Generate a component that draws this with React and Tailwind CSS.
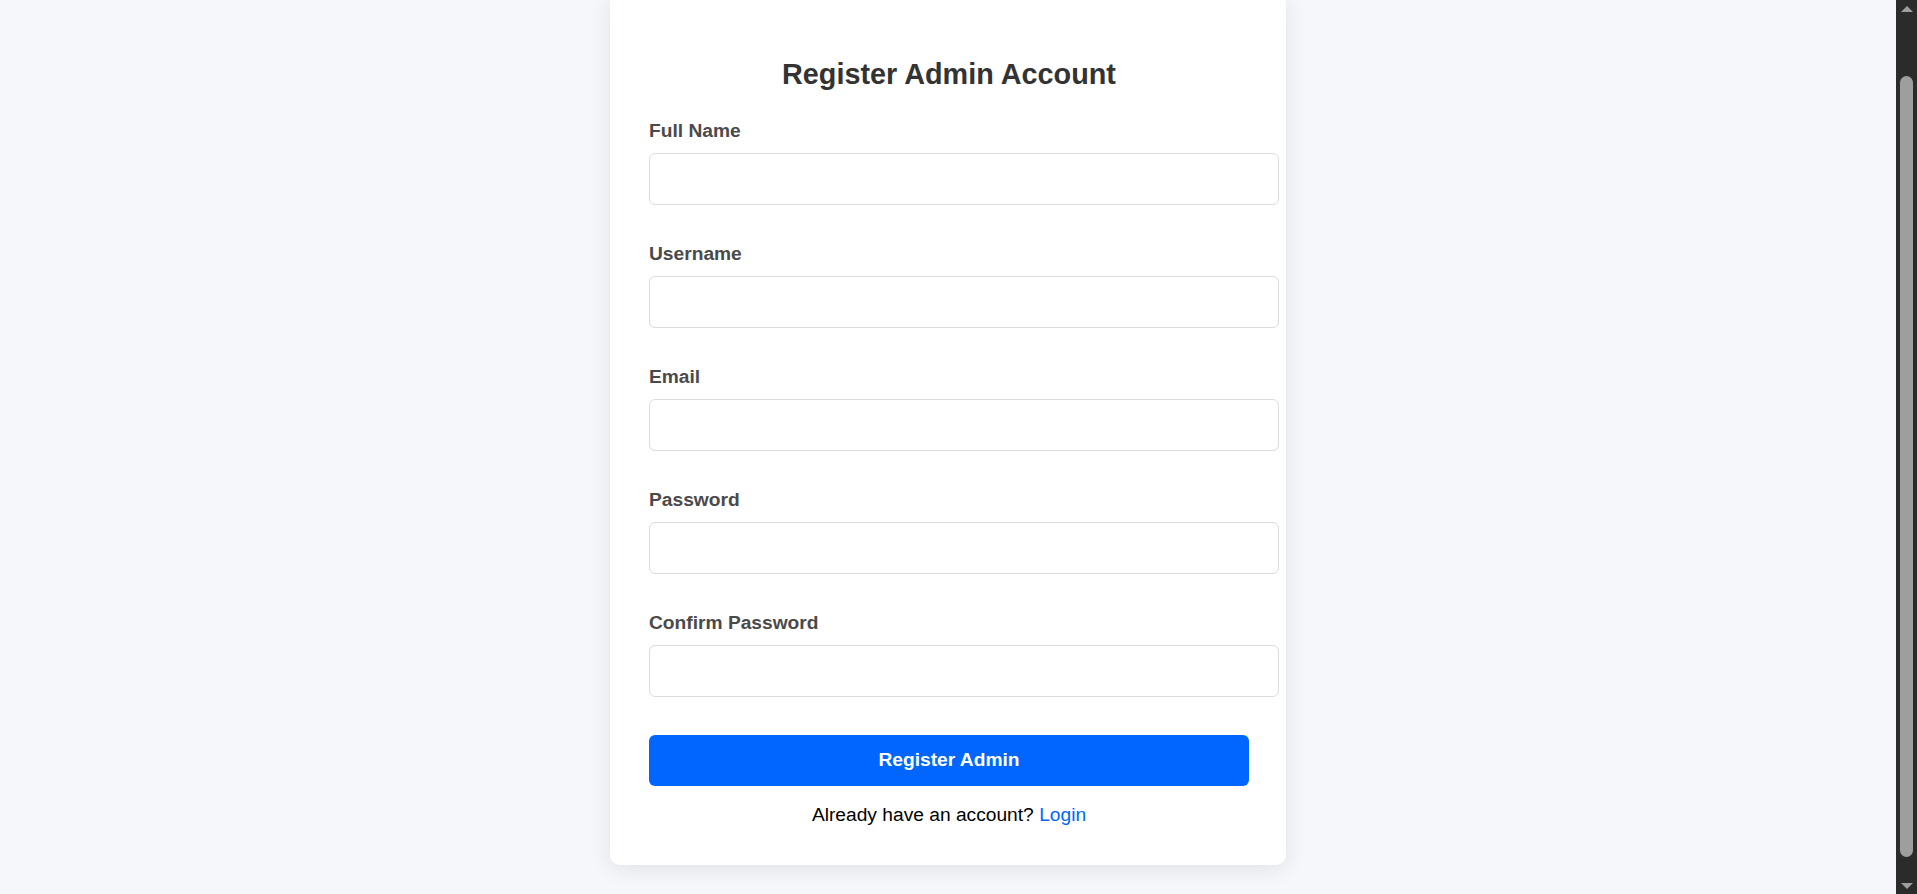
import { useState } from "react";

const fields = [
  { id: "fullName", label: "Full Name", type: "text" },
  { id: "username", label: "Username", type: "text" },
  { id: "email", label: "Email", type: "email" },
  { id: "password", label: "Password", type: "password" },
  { id: "confirm", label: "Confirm Password", type: "password" },
];

function Scrollbar() {
  return (
    <div className="w-[21px] h-full bg-[#2b2b2b] flex flex-col items-center shrink-0">
      {/* up arrow */}
      <div className="h-[17px] flex items-center justify-center">
        <div className="w-0 h-0 border-l-[6px] border-r-[6px] border-b-[6px] border-l-transparent border-r-transparent border-b-[#9e9e9e]" />
      </div>
      <div className="flex-1 w-full px-[4px] pt-[59px] pb-[20px]">
        <div className="h-full w-full rounded-full bg-[#9e9e9e]" />
      </div>
      {/* down arrow */}
      <div className="h-[17px] flex items-center justify-center">
        <div className="w-0 h-0 border-l-[6px] border-r-[6px] border-t-[6px] border-l-transparent border-r-transparent border-t-[#9e9e9e]" />
      </div>
    </div>
  );
}

export default function App() {
  const [form, setForm] = useState({});

  function update(id, value) {
    setForm({ ...form, [id]: value });
  }

  return (
    <div className="flex h-screen overflow-hidden font-['Liberation_Sans',Arial,sans-serif]">
      <main className="flex-1 bg-[#f6f7fb] flex justify-center">
        {/* Card */}
        <div className="w-[676px] self-start -mt-[7px] bg-white rounded-[10px] shadow-[0_4px_22px_rgba(0,0,0,0.09)] pt-[65px] pb-[39px] pl-[39px] pr-[37px]">
          <h2 className="text-center text-[28.8px] leading-[33px] font-bold text-[#333333] mb-[29px]">
            Register Admin Account
          </h2>

          <form onSubmit={(e) => e.preventDefault()}>
            {fields.map((f) => (
              <div key={f.id} className="mb-[38px]">
                <label
                  htmlFor={f.id}
                  className="block text-[19.2px] leading-[22px] font-bold text-[#4a4a4a] mb-[11px]"
                >
                  {f.label}
                </label>
                <input
                  id={f.id}
                  type={f.type}
                  value={form[f.id] || ""}
                  onChange={(e) => update(f.id, e.target.value)}
                  className="block w-[630px] h-[52px] px-[14px] border border-[#dcdcdc] rounded-[6px] text-[19.2px] outline-none bg-white"
                />
              </div>
            ))}

            <button
              type="submit"
              className="block w-[600px] h-[51px] mt-[38px] bg-[#0066ff] rounded-[6px] text-white text-[19.2px] font-bold"
            >
              Register Admin
            </button>
          </form>

          <p className="text-center text-[19.2px] leading-[22px] text-black mt-[18px]">
            Already have an account?{" "}
            <a href="#" className="text-[#0066ff]">
              Login
            </a>
          </p>
        </div>
      </main>
      <Scrollbar />
    </div>
  );
}
